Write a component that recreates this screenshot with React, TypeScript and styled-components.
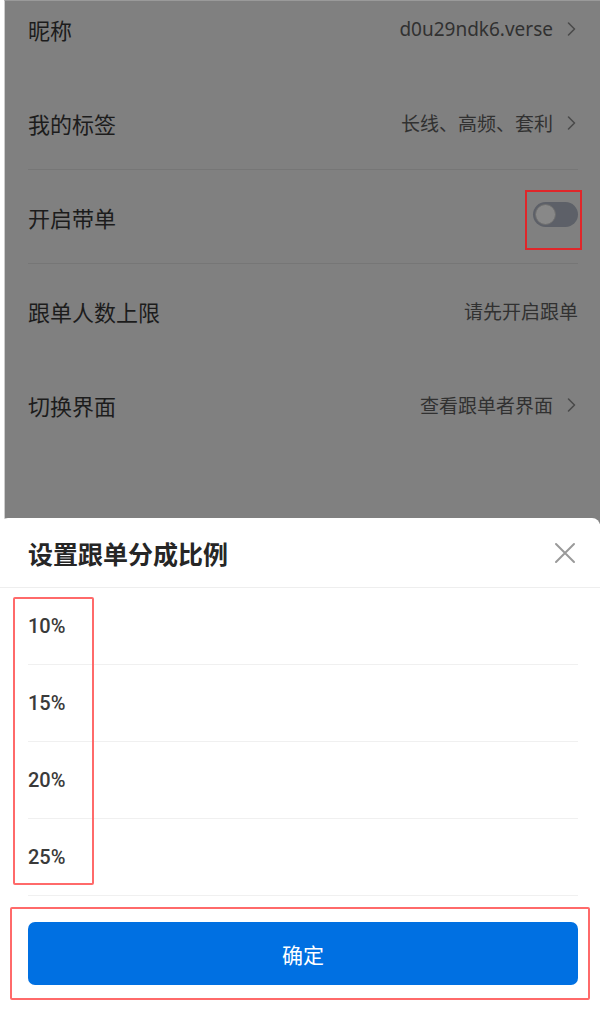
import React from 'react';
import styled, { createGlobalStyle } from 'styled-components';

const GlobalStyle = createGlobalStyle`
  html, body {
    margin: 0;
    padding: 0;
    background: #fff;
  }
  * {
    box-sizing: border-box;
  }
`;

interface SettingItem {
  label: string;
  value?: string;
  arrow?: boolean;
  toggle?: boolean;
  divider?: boolean;
}

const settings: SettingItem[] = [
  { label: '昵称', value: 'd0u29ndk6.verse', arrow: true },
  { label: '我的标签', value: '长线、高频、套利', arrow: true, divider: true },
  { label: '开启带单', toggle: true, divider: true },
  { label: '跟单人数上限', value: '请先开启跟单' },
  { label: '切换界面', value: '查看跟单者界面', arrow: true },
];

const ratios = ['10%', '15%', '20%', '25%'];

// flecha derecha de las filas
const Chevron = () => (
  <svg width="9" height="16" viewBox="0 0 9 16" fill="none">
    <path d="M1.5 2 L7.5 8 L1.5 14" stroke="#4a4a4a" strokeWidth="1.6" strokeLinecap="round" strokeLinejoin="round" />
  </svg>
);

const CloseIcon = () => (
  <svg width="22" height="22" viewBox="0 0 22 22" fill="none">
    <path d="M2 2 L20 20 M20 2 L2 20" stroke="#9a9a9a" strokeWidth="2" strokeLinecap="round" />
  </svg>
);

const App: React.FC = () => {
  return (
    <Page>
      <GlobalStyle />

      {/* pantalla de ajustes, oscurecida por la máscara */}
      <DimArea>
        <SettingsList>
          {settings.map(item => (
            <SettingRow key={item.label} $divider={!!item.divider}>
              <RowLabel>{item.label}</RowLabel>
              {item.toggle ? (
                <Toggle>
                  <Knob />
                  <ToggleMark />
                </Toggle>
              ) : (
                <RowValue>
                  {item.value}
                  {item.arrow && <Chevron />}
                </RowValue>
              )}
            </SettingRow>
          ))}
        </SettingsList>
      </DimArea>

      {/* hoja inferior para elegir el porcentaje */}
      <Sheet>
        <SheetHeader>
          <SheetTitle>设置跟单分成比例</SheetTitle>
          <CloseButton aria-label="关闭">
            <CloseIcon />
          </CloseButton>
        </SheetHeader>

        <OptionList>
          {ratios.map(r => (
            <OptionRow key={r}>{r}</OptionRow>
          ))}
          <Mark $top={9} $left={13} $width={81} $height={288} />
        </OptionList>

        <SheetFooter>
          <ConfirmButton>确定</ConfirmButton>
          <Mark $top={11} $left={10} $width={580} $height={93} />
        </SheetFooter>
      </Sheet>
    </Page>
  );
};

export default App;

const Page = styled.div`
  width: 600px;
  height: 1009px;
  overflow: hidden;
  display: flex;
  flex-direction: column;
  background: #fff;
  font-family: Roboto, "Noto Sans CJK SC", sans-serif;
`;

const DimArea = styled.div`
  height: 524px;
  flex-shrink: 0;
  margin-left: 4px;
  background: #808080;
  border-left: 1px solid #cdcdcd;
  border-top: 1px solid #9a9a9a;
  overflow: hidden;
`;

const SettingsList = styled.div`
  margin-top: -19px;
  padding: 0 22px 0 23px;
`;

const SettingRow = styled.div<{ $divider: boolean }>`
  height: 94px;
  display: flex;
  align-items: center;
  justify-content: space-between;
  border-bottom: 1px solid ${({ $divider }) => ($divider ? '#767676' : 'transparent')};
`;

const RowLabel = styled.span`
  font-size: 22px;
  color: #1c1c1c;
`;

const RowValue = styled.span`
  display: flex;
  align-items: center;
  gap: 14px;
  font-family: "Noto Sans", "Noto Sans CJK SC", sans-serif;
  font-size: 19px;
  color: #313131;

  svg {
    margin-right: 2px;
  }
`;

const Toggle = styled.div`
  position: relative;
  width: 45px;
  height: 25px;
  margin-top: -5px;
  border-radius: 13px;
  background: #5d6068;
  padding: 2px;
`;

const Knob = styled.div`
  width: 21px;
  height: 21px;
  border-radius: 50%;
  background: #888888;
  border: 1px solid #6e6e6e;
`;

// marco rojo de anotación sobre el interruptor
const ToggleMark = styled.div`
  position: absolute;
  left: -8px;
  top: -12px;
  width: 57px;
  height: 60px;
  border: 2px solid #e0262a;
`;

const Sheet = styled.div`
  position: relative;
  flex: 1;
  margin-top: -6px;
  background: #fff;
  border-radius: 8px 8px 0 0;
  display: flex;
  flex-direction: column;
`;

const SheetHeader = styled.div`
  height: 70px;
  display: flex;
  align-items: center;
  justify-content: space-between;
  padding: 0 24px 0 28px;
  border-bottom: 1px solid #eeeeee;
`;

const SheetTitle = styled.h2`
  margin: 0;
  font-size: 25px;
  font-weight: 700;
  color: #262626;
`;

const CloseButton = styled.button`
  border: none;
  background: none;
  padding: 0;
  display: flex;
  cursor: pointer;
`;

const OptionList = styled.div`
  position: relative;
  padding: 0 22px 0 28px;
`;

const OptionRow = styled.div`
  height: 77px;
  display: flex;
  align-items: center;
  font-size: 20px;
  font-weight: 500;
  color: #3a3a3a;
  border-bottom: 1px solid #f0f0f0;
`;

const SheetFooter = styled.div`
  position: relative;
  padding: 26px 22px 0 28px;
`;

const ConfirmButton = styled.button`
  width: 100%;
  height: 63px;
  border: none;
  border-radius: 7px;
  background: #0070e2;
  color: #fff;
  font-family: inherit;
  font-size: 21px;
  cursor: pointer;
`;

interface MarkProps {
  $top: number;
  $left: number;
  $width: number;
  $height: number;
}

// marcos rojos claros de anotación
const Mark = styled.div<MarkProps>`
  position: absolute;
  top: ${({ $top }) => $top}px;
  left: ${({ $left }) => $left}px;
  width: ${({ $width }) => $width}px;
  height: ${({ $height }) => $height}px;
  border: 2px solid #ff6a6a;
  border-radius: 2px;
  pointer-events: none;
`;
